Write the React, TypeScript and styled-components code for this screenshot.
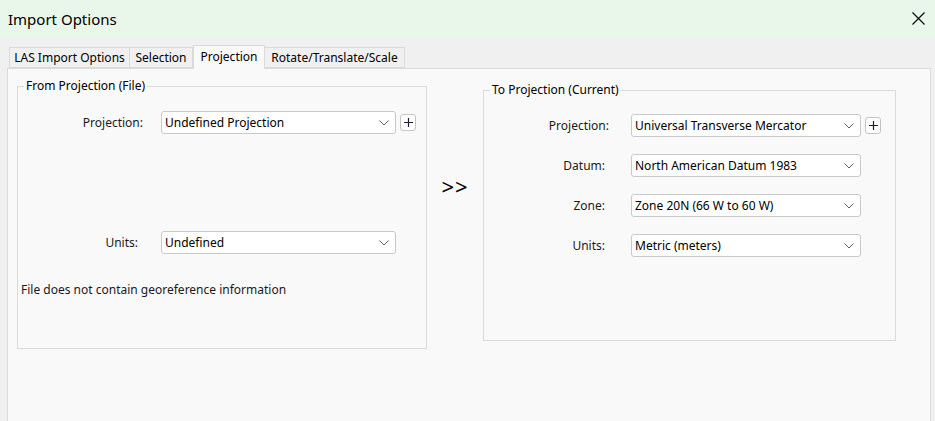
import React from "react";
import styled, { createGlobalStyle } from "styled-components";

const GlobalStyle = createGlobalStyle`
  html, body {
    margin: 0;
    padding: 0;
    background: #f0f0f0;
  }
  body {
    font-family: "Segoe UI", "Noto Sans", "Liberation Sans", sans-serif;
    font-size: 12px;
    color: #1a1a1a;
  }
`

const Window = styled.div`
  display: flex;
  flex-direction: column;
  width: 935px;
  height: 421px;
  overflow: hidden;
  background: #f0f0f0;
`

const TitleBar = styled.header`
  display: flex;
  align-items: center;
  justify-content: space-between;
  height: 37px;
  flex-shrink: 0;
  padding: 0 10px 0 8px;
  box-sizing: border-box;
  background: #e9f7ea;
`

const Title = styled.h1`
  margin: 0;
  font-size: 15px;
  font-weight: 400;
  color: #000;
`

const CloseButton = styled.button`
  display: flex;
  align-items: center;
  justify-content: center;
  width: 14px;
  height: 14px;
  padding: 0;
  border: none;
  background: transparent;
`

const TabStrip = styled.nav`
  display: flex;
  align-items: flex-end;
  height: 31px;
  padding-left: 9px;
  flex-shrink: 0;
  box-sizing: border-box;
`

interface TabProps {
  width: number
  selected?: boolean
}

const Tab = styled.div<TabProps>`
  display: flex;
  align-items: center;
  justify-content: center;
  width: ${({ width }) => width}px;
  height: ${({ selected }) => (selected ? 24 : 21)}px;
  margin-bottom: ${({ selected }) => (selected ? -1 : 0)}px;
  padding-bottom: ${({ selected }) => (selected ? 3 : 0)}px;
  box-sizing: border-box;
  border: 1px solid #dadada;
  border-bottom: ${({ selected }) => (selected ? "none" : "1px solid #dadada")};
  border-left-width: ${({ selected }) => (selected ? 1 : 0)}px;
  &:first-child { border-left-width: 1px; }
  background: ${({ selected }) => (selected ? "#f9f9f9" : "#f0f0f0")};
  position: relative;
  z-index: ${({ selected }) => (selected ? 1 : 0)};
  color: #000;
  white-space: nowrap;
`

const Pane = styled.main`
  display: flex;
  align-items: flex-start;
  height: 400px;
  margin: 0 4px 0 7px;
  padding: 9px 0 0 9px;
  box-sizing: border-box;
  border: 1px solid #dadada;
  background: #f9f9f9;
  flex-shrink: 0;
`

interface GroupProps {
  width: number
  height: number
  offset?: number
}

const Group = styled.fieldset<GroupProps>`
  width: ${({ width }) => width}px;
  height: ${({ height }) => height}px;
  margin: ${({ offset }) => offset || 0}px 0 0 0;
  padding: 0;
  box-sizing: border-box;
  border: 1px solid #dadada;
  min-width: 0;
`

const Legend = styled.legend`
  margin-left: 6px;
  padding: 0 2px;
  line-height: 16px;
  color: #000;
`

const Arrow = styled.div`
  width: 56px;
  margin-top: 97px;
  text-align: center;
  font-size: 22px;
  line-height: 22px;
  letter-spacing: 1px;
  color: #000;
`

interface RowProps {
  labelWidth: number
  comboWidth: number
  gap: number
}

const Row = styled.div<RowProps>`
  display: grid;
  grid-template-columns: ${({ labelWidth, comboWidth }) => `${labelWidth}px ${comboWidth}px auto`};
  align-items: center;
  margin-top: ${({ gap }) => gap}px;
`

interface LabelProps {
  inset: number
}

const Label = styled.label<LabelProps>`
  text-align: right;
  padding-right: ${({ inset }) => inset}px;
  color: #1a1a1a;
`

const Combo = styled.div`
  display: flex;
  align-items: center;
  justify-content: space-between;
  height: 23px;
  padding: 0 6px 0 3px;
  box-sizing: border-box;
  border: 1px solid #c9c9c9;
  border-radius: 3px;
  background: #fff;
  color: #000;
`

const PlusButton = styled.button`
  display: flex;
  align-items: center;
  justify-content: center;
  width: 16px;
  height: 17px;
  margin-left: 4px;
  padding: 0;
  box-sizing: border-box;
  border: 1px solid #c4c4c4;
  border-radius: 3px;
  background: #fff;
`

const Note = styled.p`
  margin: 28px 0 0 3px;
  line-height: 16px;
  color: #1a1a1a;
`

function Chevron() {
  return (
    <svg width="10" height="6" viewBox="0 0 10 6">
      <path d="M0.5 0.5 L5 5 L9.5 0.5" fill="none" stroke="#606060" strokeWidth="1" />
    </svg>
  )
}

function Plus() {
  return (
    <svg width="9" height="9" viewBox="0 0 9 9">
      <path d="M4.5 0 V9 M0 4.5 H9" stroke="#1b1b3a" strokeWidth="1.2" />
    </svg>
  )
}

interface FieldProps {
  label: string
  value: string
  labelWidth: number
  comboWidth: number
  inset: number
  gap: number
  plus?: boolean
}

function Field({ label, value, labelWidth, comboWidth, inset, gap, plus }: FieldProps) {
  return (
    <Row labelWidth={labelWidth} comboWidth={comboWidth} gap={gap}>
      <Label inset={inset}>{label}</Label>
      <Combo>
        <span>{value}</span>
        <Chevron />
      </Combo>
      {plus ? <PlusButton><Plus /></PlusButton> : <span />}
    </Row>
  )
}

const tabs = [
  { id: 1, label: "LAS Import Options", width: 121 },
  { id: 2, label: "Selection", width: 63 },
  { id: 3, label: "Projection", width: 72 },
  { id: 4, label: "Rotate/Translate/Scale", width: 140 },
]

const target = [
  { label: "Projection:", value: "Universal Transverse Mercator", inset: 22, plus: true },
  { label: "Datum:", value: "North American Datum 1983", inset: 26 },
  { label: "Zone:", value: "Zone 20N (66 W to 60 W)", inset: 26 },
  { label: "Units:", value: "Metric (meters)", inset: 26 },
]

export default function App() {
  const active = 3

  return (
    <Window>
      <GlobalStyle />
      <TitleBar>
        <Title>Import Options</Title>
        <CloseButton aria-label="Close">
          <svg width="13" height="13" viewBox="0 0 13 13">
            <path d="M0.5 0.5 L12.5 12.5 M12.5 0.5 L0.5 12.5" stroke="#000" strokeWidth="1.1" />
          </svg>
        </CloseButton>
      </TitleBar>

      <TabStrip>
        {tabs.map((tab) => (
          <Tab key={tab.id} width={tab.width} selected={tab.id === active}>
            {tab.label}
          </Tab>
        ))}
      </TabStrip>

      <Pane>
        <Group width={410} height={271}>
          <Legend>From Projection (File)</Legend>
          <Field
            label="Projection:"
            value="Undefined Projection"
            labelWidth={143}
            comboWidth={235}
            inset={18}
            gap={17}
            plus
          />
          <Field
            label="Units:"
            value="Undefined"
            labelWidth={143}
            comboWidth={235}
            inset={23}
            gap={97}
          />
          <Note>File does not contain georeference information</Note>
        </Group>

        <Arrow>&gt;&gt;</Arrow>

        <Group width={413} height={259} offset={4}>
          <Legend>To Projection (Current)</Legend>
          {target.map((row, index) => (
            <Field
              key={row.label}
              label={row.label}
              value={row.value}
              labelWidth={147}
              comboWidth={230}
              inset={row.inset}
              gap={index === 0 ? 16 : 17}
              plus={row.plus}
            />
          ))}
        </Group>
      </Pane>
    </Window>
  )
}
